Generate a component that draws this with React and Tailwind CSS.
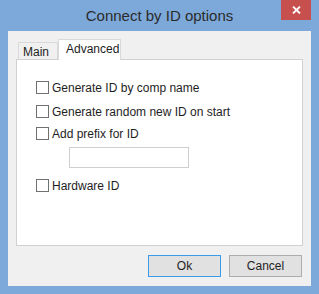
import React from "react";

const Check = ({ label }) => (
  <label className="flex items-center h-[13px] gap-[3px]">
    <span className="w-[13px] h-[13px] border border-[#707070] bg-white shrink-0" />
    <span className="leading-none">{label}</span>
  </label>
);

const App = () => {
  return (
    <div
      className="w-[319px] h-[294px] bg-[#7ca9d9] flex flex-col text-[12px] text-[#1e1e1e]"
      style={{ fontFamily: '"Liberation Sans", Arial, sans-serif' }}
    >
      {/* title bar */}
      <div className="relative h-[31px] flex items-center justify-center">
        <span className="text-[15px] text-[#2b2b2b] pt-[1px]">Connect by ID options</span>
        <div className="absolute top-0 right-[8px] w-[30px] h-[20px] bg-[#c7504f] flex items-center justify-center">
          <svg width="9" height="8" viewBox="0 0 9 8">
            <path d="M1 0.5 L8 7.5 M8 0.5 L1 7.5" stroke="#fff" strokeWidth="1.8" />
          </svg>
        </div>
      </div>

      {/* client */}
      <div className="mx-[8px] h-[255px] bg-[#f0f0f0] px-[8px] pt-[8px] flex flex-col">
        {/* tabs */}
        <div className="h-[20px] flex items-end pl-[2px]">
          <div className="w-[40px] h-[17px] border border-b-0 border-[#d9d9d9] bg-[#f0f0f0] pl-[4px] pt-[2px] leading-[14px]">
            Main
          </div>
          <div className="relative w-[63px] h-[21px] -mb-[1px] border border-b-0 border-[#d9d9d9] bg-white pl-[7px] pt-[2px] leading-[14px]">
            Advanced
          </div>
        </div>

        {/* panel */}
        <div className="h-[187px] border border-[#d0d0d0] bg-white pl-[19px] pt-[21px] flex flex-col">
          <Check label="Generate ID by comp name" />
          <div className="h-[11px]" />
          <Check label="Generate random new ID on start" />
          <div className="h-[9px]" />
          <Check label="Add prefix for ID" />
          <div className="h-[7px]" />
          <div className="ml-[33px] w-[120px] h-[21px] border border-[#cfcfcf] bg-white" />
          <div className="h-[11px]" />
          <Check label="Hardware ID" />
        </div>

        {/* buttons */}
        <div className="flex justify-end gap-[8px] mt-[9px] pr-[1px]">
          <button className="w-[73px] h-[22px] border border-[#3c9ae8] bg-[#e1e1e1] leading-none">Ok</button>
          <button className="w-[73px] h-[22px] border border-[#adadad] bg-[#e1e1e1] leading-none">Cancel</button>
        </div>
      </div>
    </div>
  );
};

export default App;
